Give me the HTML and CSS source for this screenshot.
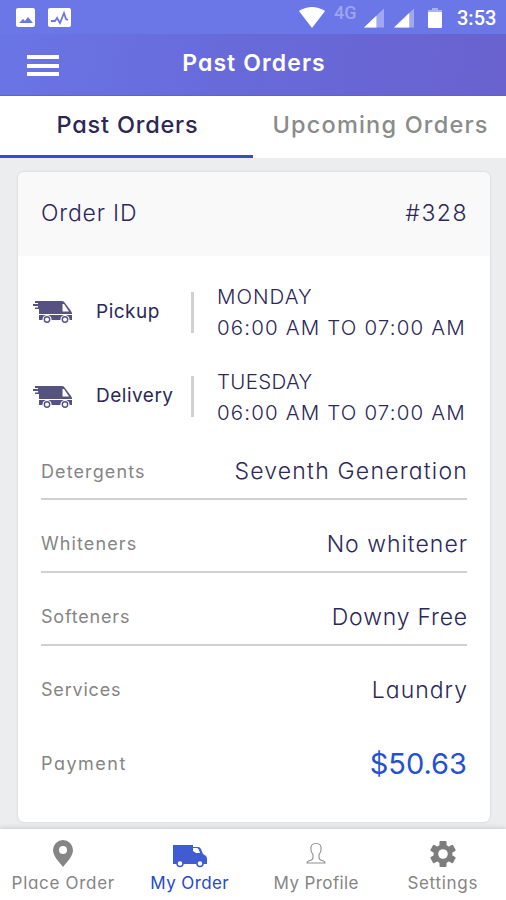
FILE: index.html
```html
<!DOCTYPE html>
<html lang="en">
<head>
    <meta charset="UTF-8">
    <meta name="viewport" content="width=device-width, initial-scale=1.0">
    <title>Past Orders</title>
    <link rel="stylesheet" href="styles.css">
</head>
<body>
    <svg width="0" height="0" class="symbols">
        <symbol id="fast-truck" viewBox="0 0 40 24">
            <path fill="#56527f" d="M6 1h23q2 0 3 2l6 8 1 2v7H6V9H2V7.500H5V6H0V4h5V3H2V1z"/>
            <path fill="#fff" d="M29.500 4h1.500l5 7.500h-6.500z"/>
            <path stroke="#fff" stroke-width="1.200" d="M6 14.500h33"/>
            <g fill="#56527f" stroke="#fff" stroke-width="1.2">
                <circle cx="14" cy="19.500" r="4"/>
                <circle cx="32" cy="19.500" r="4"/>
            </g>
            <circle cx="14" cy="19.500" r="2" fill="#fff"/>
            <circle cx="32" cy="19.500" r="2" fill="#fff"/>
        </symbol>
    </svg>

    <div class="status-bar">
        <svg class="status-icon" width="19" height="19" viewBox="0 0 19 19">
            <rect width="19" height="19" rx="2" fill="#fff"/>
            <path fill="#6b77e5" d="M3 15l4-4 2 2 3-4 5 6z"/>
        </svg>
        <svg class="status-icon" width="23" height="19" viewBox="0 0 23 19">
            <rect width="23" height="19" rx="2" fill="#fff"/>
            <path fill="none" stroke="#6b77e5" stroke-width="1.8" d="M3 13h4l2-3 3 5 4-10 2 6 2 1"/>
        </svg>
        <svg class="wifi" width="26" height="21" viewBox="0 0 26 21">
            <path fill="#fff" d="M0 4Q13-4 26 4L13 21z"/>
        </svg>
        <span class="network">4G</span>
        <svg class="signal" width="20" height="20" viewBox="0 0 21 20">
            <path fill="#a0a9f0" d="M21 0v20H0z"/>
            <path fill="#fff" d="M13 7.600V20H0z"/>
        </svg>
        <svg class="signal second" width="20" height="20" viewBox="0 0 21 20">
            <path fill="#a0a9f0" d="M21 0v20H0z"/>
            <path fill="#fff" d="M16 4.800V20H0z"/>
        </svg>
        <svg class="battery" width="14" height="20" viewBox="0 0 14 20">
            <path fill="#a8b0f1" d="M4 0h6v2h4v4H0V2h4z"/>
            <path fill="#fff" d="M0 4h14v15q0 1-1 1H1q-1 0-1-1z"/>
        </svg>
        <span class="clock">3:53</span>
    </div>

    <div class="header">
        <div class="menu-btn"><span></span><span></span><span></span></div>
        <h1>Past Orders</h1>
    </div>

    <div class="tabs">
        <div class="tab active">Past Orders</div>
        <div class="tab">Upcoming Orders</div>
    </div>

    <div class="content">
        <div class="card">
            <div class="card-header">
                <span class="order-label">Order ID</span>
                <span class="order-number">#328</span>
            </div>

            <div class="schedule">
                <svg class="truck" width="40" height="24"><use href="#fast-truck"/></svg>
                <span class="type">Pickup</span>
                <div class="time"><span class="monday">MONDAY</span><br><span class="hours">06:00 AM TO 07:00 AM</span></div>
            </div>
            <div class="schedule">
                <svg class="truck" width="40" height="24"><use href="#fast-truck"/></svg>
                <span class="type">Delivery</span>
                <div class="time"><span class="tuesday">TUESDAY</span><br><span class="hours">06:00 AM TO 07:00 AM</span></div>
            </div>

            <div class="rows">
                <div class="row"><span class="detergents">Detergents</span><b class="seventh">Seventh Generation</b></div>
                <div class="row"><span class="whiteners">Whiteners</span><b>No whitener</b></div>
                <div class="row"><span>Softeners</span><b class="downy">Downy Free</b></div>
                <div class="row plain"><span>Services</span><b>Laundry</b></div>
                <div class="row plain"><span class="payment">Payment</span><b class="price">$50.63</b></div>
            </div>
        </div>
    </div>

    <div class="bottom-nav">
        <div class="nav-item">
            <svg width="34" height="30" viewBox="0 0 34 30">
                <path fill="#858585" fill-rule="evenodd" d="M17 2a10 10 0 0 0-10 10c0 6 6 12 10 17 4-5 10-11 10-17A10 10 0 0 0 17 2zm0 6a4 4 0 1 1 0 8 4 4 0 0 1 0-8z"/>
            </svg>
            <span class="nav-place">Place Order</span>
        </div>
        <div class="nav-item active">
            <svg width="34" height="30" viewBox="0 0 34 30">
                <path fill="#415bd0" d="M0 7h20v2h5q2 0 3 2l2 5 3 2q1 1 1 3v5H0z"/>
                <path fill="#fff" d="M20 10h4q1 0 2 2l1 3h-4l-3-2z"/>
                <g fill="#fff" stroke="#415bd0" stroke-width="1.500">
                    <circle cx="7" cy="25.500" r="3"/>
                    <circle cx="27" cy="25.500" r="3"/>
                </g>
            </svg>
            <span class="nav-order">My Order</span>
        </div>
        <div class="nav-item">
            <svg width="34" height="30" viewBox="0 0 34 30">
                <path fill="none" stroke="#929292" stroke-width="1.100" d="M17 5.500c-4 0-5.500 2-5 6 0 3 1 4 2 5v3c0 2-1 2.500-3 3-2 .5-3 1-3 2.500h18c0-1.500-1-2-3-2.500s-3-1-3-3v-3c1-1 2-2 2-5 .5-4-1-6-5-6z"/>
            </svg>
            <span class="nav-profile">My Profile</span>
        </div>
        <div class="nav-item">
            <svg width="34" height="30" viewBox="0 0 34 30">
                <g fill="#7d7d7d" transform="translate(17 16)">
                    <rect x="-3.500" y="-13" width="7" height="26" rx="1"/>
                    <rect x="-3.500" y="-13" width="7" height="26" rx="1" transform="rotate(60)"/>
                    <rect x="-3.500" y="-13" width="7" height="26" rx="1" transform="rotate(120)"/>
                    <circle r="9.500"/>
                    <circle r="4.800" fill="#fff"/>
                </g>
            </svg>
            <span class="nav-settings">Settings</span>
        </div>
    </div>
</body>
</html>
```

FILE: styles.css
```css
* {
    box-sizing: border-box;
}

body {
    margin: 0;
    height: 900px;
    display: flex;
    flex-direction: column;
    overflow: hidden;
    background: #ebedee;
    color: #2d2858;
    font-family: Inter, "Open Sans", sans-serif;
    font-feature-settings: "cv11";
    white-space: nowrap;
}

.symbols {
    position: absolute;
}

/* Status bar */
.status-bar {
    height: 34px;
    display: flex;
    align-items: flex-start;
    padding: 8px 10px 0 16px;
    background: #6b77e6;
    color: #fff;
    font-family: Roboto, sans-serif;
}

.status-icon {
    margin-right: 13px;
}

.wifi {
    margin-left: auto;
    margin-top: -1px;
}

.network {
    width: 24px;
    margin: -6px 6px 0 9px;
    font-size: 18px;
    font-weight: 500;
    color: #9ba5f0;
}

.second {
    margin-left: 10px;
}

.battery {
    margin: 0 15px 0 14px;
}

.clock {
    width: 39px;
    font-size: 20px;
    font-weight: 500;
    line-height: 21px;
}

/* Header */
.header {
    height: 62px;
    display: flex;
    align-items: center;
    justify-content: center;
    position: relative;
    background: linear-gradient(100deg, #6a75e5 0%, #686ada 45%, #6962cf 100%);
    border-bottom: 1px solid #6460cf;
}

.menu-btn {
    position: absolute;
    left: 27px;
    top: 21px;
    display: flex;
    flex-direction: column;
    gap: 4.5px;
}

.menu-btn span {
    width: 32px;
    height: 4px;
    background: #fff;
}

h1 {
    margin: 0 0 3px 2px;
    color: #fff;
    font-size: 23px;
    font-weight: 600;
    letter-spacing: 1.1px;
}

/* Tabs */
.tabs {
    height: 62px;
    display: flex;
    background: #fff;
}

.tab {
    width: 50%;
    padding-left: 2px;
    text-align: center;
    font-size: 23.5px;
    font-weight: 500;
    line-height: 58px;
    color: #8b8b8b;
    letter-spacing: 1.2px;
    border-bottom: 3px solid transparent;
}

.tab.active {
    color: #2d2754;
    letter-spacing: 0.8px;
    border-bottom-color: #2f50c8;
}

/* Order card */
.content {
    flex: 1;
    padding: 14px 16px 0 18px;
}

.card {
    height: 650px;
    background: #fff;
    border-radius: 6px;
    overflow: hidden;
    box-shadow: 0 0 2px #bfc4c6;
}

.card-header {
    height: 84px;
    display: flex;
    justify-content: space-between;
    padding: 0 23px;
    margin-bottom: 14px;
    line-height: 82px;
    background: #f9f9f9;
    font-size: 23px;
    font-weight: 300;
}

.order-label {
    letter-spacing: 0.8px;
}

.order-number {
    letter-spacing: 1.5px;
    margin-right: -1px;
}

.schedule {
    height: 84.500px;
    display: flex;
    align-items: center;
    padding-left: 15px;
}

.type {
    width: 98px;
    margin-left: 23px;
    padding-bottom: 1px;
    font-size: 19px;
    line-height: 40px;
    letter-spacing: 0.5px;
    border-right: 3px solid #d1d1d1;
}

.time {
    margin-left: 23px;
    font-size: 20.5px;
    font-weight: 300;
    line-height: 31px;
}

.monday {
    letter-spacing: 1px;
}

.tuesday {
    letter-spacing: 0.3px;
}

.hours {
    letter-spacing: 1.15px;
}

.rows {
    padding: 0 23px;
    margin-top: 2px;
}

.row {
    height: 73px;
    display: flex;
    align-items: center;
    justify-content: space-between;
    padding-top: 16px;
    border-bottom: 2px solid #d1d1d1;
}

.row:first-child {
    height: 59px;
    padding-top: 3px;
}

.row.plain {
    border-bottom-color: transparent;
}

.row:last-child {
    padding-top: 18px;
}

.row span {
    font-size: 18px;
    letter-spacing: 0.8px;
    color: #858585;
}

.row .detergents,
.row .whiteners {
    letter-spacing: 1.1px;
}

.row .payment {
    letter-spacing: 1.5px;
}

.row b {
    margin-right: -1px;
    font-size: 23px;
    font-weight: 300;
    letter-spacing: 1px;
}

.row .seventh {
    letter-spacing: 1.2px;
}

.row .downy {
    letter-spacing: 0.8px;
}

.row .price {
    margin-right: 0;
    font-size: 29px;
    font-weight: 400;
    letter-spacing: 0;
    color: #2550cf;
}

/* Bottom navigation */
.bottom-nav {
    height: 71px;
    display: flex;
    background: #fff;
    box-shadow: 0 -1px 5px rgba(0,0,0,0.15);
    z-index: 1;
}

.nav-item {
    width: 25%;
    display: flex;
    flex-direction: column;
    align-items: center;
    padding-top: 9px;
    font-size: 17px;
    line-height: 30px;
    color: #858585;
}

.nav-item svg {
    flex-shrink: 0;
}

.nav-item.active {
    color: #2748cf;
}

.nav-place,
.nav-settings {
    letter-spacing: 0.7px;
}

.nav-order,
.nav-profile {
    letter-spacing: 0.4px;
}
```
